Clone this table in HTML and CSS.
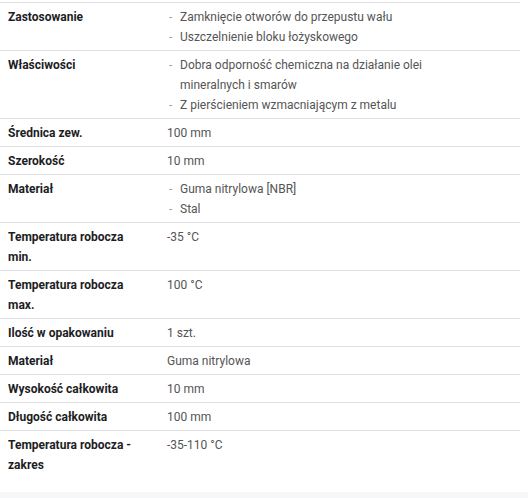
FILE: index.html
```html
<!DOCTYPE html>
<html lang="pl">
<head>
<meta charset="utf-8">
<link rel="stylesheet" href="styles.css">
</head>
<body>
<div class="spec">
  <div class="row">
    <div class="label">Zastosowanie</div>
    <ul class="value list">
      <li>Zamknięcie otworów do przepustu wału</li>
      <li>Uszczelnienie bloku łożyskowego</li>
    </ul>
  </div>
  <div class="row">
    <div class="label">Właściwości</div>
    <ul class="value list">
      <li>Dobra odporność chemiczna na działanie olei mineralnych i smarów</li>
      <li>Z pierścieniem wzmacniającym z metalu</li>
    </ul>
  </div>
  <div class="row">
    <div class="label">Średnica zew.</div>
    <div class="value">100 mm</div>
  </div>
  <div class="row">
    <div class="label">Szerokość</div>
    <div class="value">10 mm</div>
  </div>
  <div class="row">
    <div class="label">Materiał</div>
    <ul class="value list">
      <li>Guma nitrylowa [NBR]</li>
      <li>Stal</li>
    </ul>
  </div>
  <div class="row">
    <div class="label">Temperatura robocza min.</div>
    <div class="value">-35 °C</div>
  </div>
  <div class="row">
    <div class="label">Temperatura robocza max.</div>
    <div class="value">100 °C</div>
  </div>
  <div class="row">
    <div class="label">Ilość w opakowaniu</div>
    <div class="value">1 szt.</div>
  </div>
  <div class="row">
    <div class="label">Materiał</div>
    <div class="value">Guma nitrylowa</div>
  </div>
  <div class="row">
    <div class="label">Wysokość całkowita</div>
    <div class="value">10 mm</div>
  </div>
  <div class="row">
    <div class="label">Długość całkowita</div>
    <div class="value">100 mm</div>
  </div>
  <div class="row">
    <div class="label">Temperatura robocza - zakres</div>
    <div class="value">-35-110 °C</div>
  </div>
</div>
<div class="band"></div>
</body>
</html>
```

FILE: styles.css
```css
html, body {
  margin: 0;
  padding: 0;
  background: #ffffff;
}
body {
  font-family: Roboto, "Liberation Sans", sans-serif;
  font-size: 12px;
  line-height: 20px;
  color: #555555;
}
.spec {
  width: 520px;
  padding-top: 2px;
  margin-bottom: 14px;
}
.row {
  display: grid;
  grid-template-columns: 159px 1fr;
  border-top: 1px solid #e2e2e6;
  padding: 4px 0 3px;
}
.label {
  padding: 0 16px 0 8px;
  font-weight: 700;
  color: #1d1d1f;
}
.value {
  padding: 0 8px;
  color: #555555;
}
.list {
  margin: 0;
  list-style: none;
}
.list li {
  display: flex;
  max-width: 280px;
}
.list li::before {
  content: "-";
  flex: 0 0 13px;
  padding-left: 2px;
  box-sizing: border-box;
  color: #a0a0a0;
}
.band {
  height: 20px;
  background: #f6f7f9;
}
```
